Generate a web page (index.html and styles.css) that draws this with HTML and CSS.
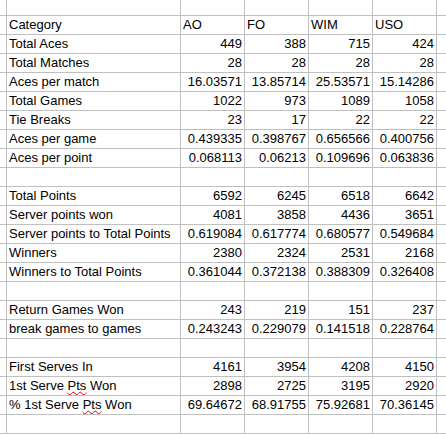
FILE: index.html
```html
<!DOCTYPE html>
<html>
<head>
<meta charset="utf-8">
<link rel="stylesheet" href="styles.css">
</head>
<body>
<div class="sheet">
  <div class="row"><div></div><div></div><div></div><div></div><div></div><div></div><div></div></div>
  <div class="row"><div></div><div>Category</div><div>AO</div><div>FO</div><div>WIM</div><div>USO</div><div></div></div>
  <div class="row"><div></div><div>Total Aces</div><div class="n">449</div><div class="n">388</div><div class="n">715</div><div class="n">424</div><div></div></div>
  <div class="row"><div></div><div>Total Matches</div><div class="n">28</div><div class="n">28</div><div class="n">28</div><div class="n">28</div><div></div></div>
  <div class="row"><div></div><div>Aces per match</div><div class="n">16.03571</div><div class="n">13.85714</div><div class="n">25.53571</div><div class="n">15.14286</div><div></div></div>
  <div class="row"><div></div><div>Total Games</div><div class="n">1022</div><div class="n">973</div><div class="n">1089</div><div class="n">1058</div><div></div></div>
  <div class="row"><div></div><div>Tie Breaks</div><div class="n">23</div><div class="n">17</div><div class="n">22</div><div class="n">22</div><div></div></div>
  <div class="row"><div></div><div>Aces per game</div><div class="n">0.439335</div><div class="n">0.398767</div><div class="n">0.656566</div><div class="n">0.400756</div><div></div></div>
  <div class="row"><div></div><div>Aces per point</div><div class="n">0.068113</div><div class="n">0.06213</div><div class="n">0.109696</div><div class="n">0.063836</div><div></div></div>
  <div class="row"><div></div><div></div><div></div><div></div><div></div><div></div><div></div></div>
  <div class="row"><div></div><div>Total Points</div><div class="n">6592</div><div class="n">6245</div><div class="n">6518</div><div class="n">6642</div><div></div></div>
  <div class="row"><div></div><div>Server points won</div><div class="n">4081</div><div class="n">3858</div><div class="n">4436</div><div class="n">3651</div><div></div></div>
  <div class="row"><div></div><div>Server points to Total Points</div><div class="n">0.619084</div><div class="n">0.617774</div><div class="n">0.680577</div><div class="n">0.549684</div><div></div></div>
  <div class="row"><div></div><div>Winners</div><div class="n">2380</div><div class="n">2324</div><div class="n">2531</div><div class="n">2168</div><div></div></div>
  <div class="row"><div></div><div>Winners to Total Points</div><div class="n">0.361044</div><div class="n">0.372138</div><div class="n">0.388309</div><div class="n">0.326408</div><div></div></div>
  <div class="row"><div></div><div></div><div></div><div></div><div></div><div></div><div></div></div>
  <div class="row"><div></div><div>Return Games Won</div><div class="n">243</div><div class="n">219</div><div class="n">151</div><div class="n">237</div><div></div></div>
  <div class="row"><div></div><div>break games to games</div><div class="n">0.243243</div><div class="n">0.229079</div><div class="n">0.141518</div><div class="n">0.228764</div><div></div></div>
  <div class="row"><div></div><div></div><div></div><div></div><div></div><div></div><div></div></div>
  <div class="row"><div></div><div>First Serves In</div><div class="n">4161</div><div class="n">3954</div><div class="n">4208</div><div class="n">4150</div><div></div></div>
  <div class="row"><div></div><div>1st Serve <span class="spell">Pts</span> Won</div><div class="n">2898</div><div class="n">2725</div><div class="n">3195</div><div class="n">2920</div><div></div></div>
  <div class="row"><div></div><div>% 1st Serve <span class="spell">Pts</span> Won</div><div class="n">69.64672</div><div class="n">68.91755</div><div class="n">75.92681</div><div class="n">70.36145</div><div></div></div>
  <div class="row"><div></div><div></div><div></div><div></div><div></div><div></div><div></div></div>
  <div class="row"><div></div><div></div><div></div><div></div><div></div><div></div><div></div></div>
</div>
</body>
</html>
```

FILE: styles.css
```css
html, body {
  margin: 0;
  padding: 0;
  background: #ffffff;
  overflow: hidden;
}

.sheet {
  display: grid;
  grid-template-columns: 6px 173px 63px 63px 63px 63px 9px;
  grid-template-rows: 15px;
  grid-auto-rows: 18px;
  gap: 1px;
  background: #c0c0c0;
  width: 446px;
  font-family: "Liberation Sans", Arial, sans-serif;
  font-size: 13px;
  color: #000000;
}

.row {
  display: contents;
}

.row > div {
  background: #ffffff;
  padding: 0 2px;
  line-height: 18px;
  white-space: nowrap;
  overflow: hidden;
}

.row > div.n {
  text-align: right;
}

.spell {
  text-decoration-line: underline;
  text-decoration-style: wavy;
  text-decoration-color: #e00000;
  text-decoration-thickness: 1px;
  text-underline-offset: 1px;
}
```
